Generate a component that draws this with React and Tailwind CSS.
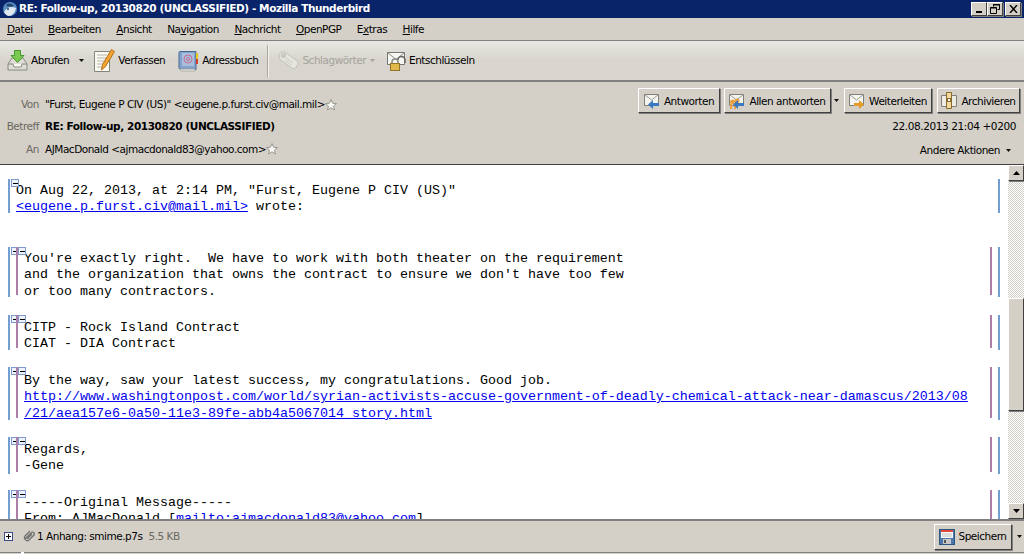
const ui = "font-['DejaVu_Sans',sans-serif] text-[10.5px] tracking-[-0.48px]";
const raised =
  "border border-t-white border-l-white border-b-[#404040] border-r-[#404040] shadow-[1px_1px_0_#808080]";

function Caret({ color = "#111" }) {
  return (
    <svg width="5" height="3" viewBox="0 0 5 3">
      <path d="M0 0h5L2.500 3z" fill={color} />
    </svg>
  );
}

function Key({ children }) {
  return <span className="underline">{children}</span>;
}

function ThunderbirdIcon() {
  return (
    <svg width="16" height="16" viewBox="0 0 16 16">
      <circle cx="8" cy="8" r="7" fill="#5b8fc4" />
      <path d="M2 11c3-5 7-6 12-4-1 5-4 8-7 8-2 0-4-2-5-4z" fill="#dfe7ef" />
      <path d="M5 3c3-1 6 0 7 2-2 1-5 1-8 0z" fill="#24466f" />
      <circle cx="6" cy="8" r="1" fill="#24466f" />
    </svg>
  );
}

function InboxIcon() {
  return (
    <svg width="21" height="21" viewBox="0 0 21 21">
      <path d="M1 14l4-6h11l4 6v6H1z" fill="#dedcd4" stroke="#8a8a80" />
      <path d="M1 14h5l1 3h7l1-3h5" fill="#fafaf6" stroke="#8a8a80" />
      <path d="M7.500 0.500h6v5h3.500l-6.500 7-6.500-7h3.500z" fill="#7cc850" stroke="#3f9a2a" />
    </svg>
  );
}

function ComposeIcon() {
  return (
    <svg width="21" height="23" viewBox="0 0 21 23">
      <path d="M0.500 2.500h15v20h-15z" fill="#fbfaf2" stroke="#85857c" />
      <path d="M3 6h10M3 9h10M3 12h8M3 15h6M3 18h5" stroke="#b4b4ac" />
      <path d="M17.500 0.500l3 2-9 15-4 3.500 1-5.500z" fill="#f2a535" stroke="#b86c14" />
    </svg>
  );
}

function BookIcon() {
  return (
    <svg width="21" height="22" viewBox="0 0 21 22">
      <path d="M2 1.500h16v18H3c-1 0-2-1-2-2V3c0-1 0-1.500 1-1.500z" fill="#84a4cc" stroke="#46688f" />
      <rect x="4" y="3" width="12" height="13" fill="#a9bedc" />
      <path d="M2 19h15v2H3z" fill="#e4e2da" stroke="#8a8a80" strokeWidth="0.500" />
      <circle cx="10" cy="9" r="4" fill="none" stroke="#c86c90" />
      <circle cx="10" cy="9" r="1.500" fill="none" stroke="#c86c90" />
      <rect x="18" y="3" width="2" height="6" fill="#e8c820" />
      <rect x="18" y="9" width="2" height="5" fill="#d43c2c" />
    </svg>
  );
}

function TagIcon() {
  return (
    <svg width="21" height="21" viewBox="0 0 21 21">
      <path d="M1 6c0-3 3-5 6-4l12 9c1.500 1 1.500 3 0.500 4l-2 3c-1 1-2.500 1-3.500 0L2 9.500z" fill="#e6e4de" stroke="#c4c1b9" />
      <circle cx="5.500" cy="5.500" r="2" fill="#d4d0c8" stroke="#bcb9b1" />
      <path d="M8 8l7 5M7 10l6 5" stroke="#cbc8c0" />
    </svg>
  );
}

function LockMailIcon() {
  return (
    <svg width="19" height="20" viewBox="0 0 19 20">
      <path d="M0.500 1.500h17v12h-17z" fill="#f6f6f2" stroke="#77776f" />
      <path d="M0.500 1.500l8.500 7 8.500-7" fill="none" stroke="#8a8a82" />
      <path d="M11 9a3.500 3.500 0 0 1 7 0v3" fill="none" stroke="#666" strokeWidth="1.500" />
      <path d="M5 13v-2a3 3 0 0 1 6 0v2" fill="none" stroke="#8a8a82" strokeWidth="1.500" />
      <rect x="3.500" y="12.500" width="9" height="7" fill="#e0b84c" stroke="#94742a" />
    </svg>
  );
}

function ReplyIcon({ arrow = "#3a78c0", flip = false, people = false }) {
  return (
    <svg width="16" height="16" viewBox="0 0 16 16">
      <path d="M0.500 1.500h14v11h-14z" fill="#f4f4f0" stroke="#808078" />
      <path d="M0.500 1.500L7.500 7l7-5.500" fill="none" stroke="#9a9a92" />
      {people && (
        <g>
          <circle cx="3.500" cy="9" r="2.500" fill="#e8a040" />
          <circle cx="8" cy="8" r="2.500" fill="#e8a040" />
          <path d="M1 16v-5h2v5zM5 16v-5h2v5z" fill="#e8a040" />
        </g>
      )}
      <path
        d={flip ? "M5 10h5V7l5 4.500-5 4.500v-3H5z" : "M15 10H9V7l-5 4.500L9 16v-3h6z"}
        fill={arrow}
      />
    </svg>
  );
}

function ArchiveIcon() {
  return (
    <svg width="16" height="18" viewBox="0 0 16 18">
      <path d="M0.500 3.500h15v11h-15z" fill="#ecebe4" stroke="#808078" />
      <path d="M5.500 0.500h5v16h-5z" fill="#f2d9a0" stroke="#8a6a2c" />
      <rect x="6.500" y="6.500" width="3" height="3" fill="#fff" stroke="#8a6a2c" />
    </svg>
  );
}

function FloppyIcon() {
  return (
    <svg width="16" height="16" viewBox="0 0 16 16">
      <rect x="0.500" y="0.500" width="15" height="15" fill="#4f78aa" stroke="#2e5484" />
      <rect x="2" y="1" width="12" height="8" fill="#f6f6f6" />
      <rect x="2" y="1" width="12" height="2" fill="#e0483c" />
      <path d="M3 5h10M3 7h10" stroke="#c4c4c4" />
      <rect x="4" y="10" width="8" height="5" fill="#c8c8c8" />
      <rect x="5" y="11" width="2" height="3" fill="#555" />
    </svg>
  );
}

function PaperclipIcon() {
  return (
    <svg width="13" height="13" viewBox="0 0 13 13">
      <path
        d="M2 9l6-6c2-2 4 0 3 2l-5 5c-2 2-6-1-4-4l5-5M4 9l5-5"
        fill="none"
        stroke="#707070"
        strokeWidth="1.300"
      />
    </svg>
  );
}

function StarIcon() {
  return (
    <svg width="12" height="12" viewBox="0 0 11 11" className="shrink-0">
      <path
        d="M5.500 0.500l1.500 3.400 3.500 0.300-2.700 2.300 0.900 3.500-3.200-1.900-3.200 1.900 0.900-3.500L0.500 4.200 4 3.900z"
        fill="#f8f8f6"
        stroke="#8c8c84"
        strokeWidth="0.800"
      />
    </svg>
  );
}

function ToolButton({ icon, label, caret, disabled, className = "" }) {
  return (
    <button
      className={`flex items-center gap-[3px] ${disabled ? "text-[#a5a29b]" : "text-black"} ${className}`}
    >
      {icon}
      <span className="pt-[1px]">{label}</span>
      {caret}
    </button>
  );
}

function HeaderButton({ icon, label, width }) {
  return (
    <button className={`flex h-[25px] items-center justify-center gap-[4px] bg-[#d4d0c8] ${raised} ${width}`}>
      {icon}
      <span className="pt-[2px]">{label}</span>
    </button>
  );
}

function Twisty({ className = "" }) {
  return (
    <span
      className={`absolute flex h-[8px] w-[8px] items-center justify-center border border-[#7f9ad0] bg-[#eef2fa] ${className}`}
    >
      <span className="h-px w-[5px] bg-black" />
    </span>
  );
}

function Quote({ nested, top, children, className = "" }) {
  return (
    <div className={`relative mr-[8px] ml-[8px] border-x-2 border-x-[#729fcf] pl-[6px] ${top} ${className}`}>
      <Twisty className="top-0 left-[1px]" />
      {nested ? (
        <div className="relative mt-[2px] mr-[6px] h-[calc(100%-2px)] border-x-2 border-x-[#ad7fa8] pl-[6px]">
          <Twisty className="top-0 left-0" />
          {children}
        </div>
      ) : (
        children
      )}
    </div>
  );
}

function Mail({ children }) {
  return <a className="text-[#0000ee] underline">{children}</a>;
}

const menus = [
  <><Key>D</Key>atei</>,
  <><Key>B</Key>earbeiten</>,
  <><Key>A</Key>nsicht</>,
  <>Na<Key>v</Key>igation</>,
  <><Key>N</Key>achricht</>,
  <><Key>O</Key>penPGP</>,
  <>E<Key>x</Key>tras</>,
  <><Key>H</Key>ilfe</>,
];

const headerRows = [
  ["Von", '"Furst, Eugene P CIV (US)" <eugene.p.furst.civ@mail.mil>', true, false],
  ["Betreff", "RE: Follow-up, 20130820 (UNCLASSIFIED)", false, true],
  ["An", "AJMacDonald <ajmacdonald83@yahoo.com>", true, false],
];

export default function App() {
  return (
    <div className={`flex h-[554px] w-[1024px] flex-col overflow-hidden bg-[#d4d0c8] text-black ${ui}`}>
      {/* title bar */}
      <div className="flex h-[18px] shrink-0 items-center justify-between bg-[#0a246a] pr-[3px] pl-[2px]">
        <div className="flex items-center gap-[1px]">
          <ThunderbirdIcon />
          <span className="font-bold tracking-[-0.41px] text-white">
            RE: Follow-up, 20130820 (UNCLASSIFIED) - Mozilla Thunderbird
          </span>
        </div>
        <div className="flex items-center">
          <span className={`flex h-[14px] w-[16px] items-end justify-center bg-[#d4d0c8] pb-[2px] ${raised}`}>
            <span className="h-[2px] w-[6px] bg-black" />
          </span>
          <span className={`flex h-[14px] w-[16px] items-center justify-center bg-[#d4d0c8] ${raised}`}>
            <svg width="10" height="10" viewBox="0 0 10 10">
              <path d="M3.500 2.500v-2h6v5h-2M0.500 3.500h6v6h-6z" fill="none" stroke="#000" />
              <path d="M3 1h7M0 4h7" stroke="#000" />
            </svg>
          </span>
          <span className={`ml-[2px] flex h-[14px] w-[16px] items-center justify-center bg-[#d4d0c8] ${raised}`}>
            <svg width="9" height="8" viewBox="0 0 9 8">
              <path d="M1 0l7 8M8 0L1 8" stroke="#000" strokeWidth="1.400" />
            </svg>
          </span>
        </div>
      </div>

      {/* menu bar */}
      <div className="flex h-[23px] shrink-0 items-center gap-[15.400px] border-b border-b-[#808080] pt-[1px] pl-[7px]">
        {menus.map((item, i) => (
          <span key={i}>{item}</span>
        ))}
      </div>

      {/* toolbar */}
      <div className="flex h-[41px] shrink-0 items-center border-b-2 border-b-[#808080] bg-gradient-to-b from-[#e8e7e3] to-[#d8d5ce] to-50% pl-[7px]">
        <ToolButton icon={<InboxIcon />} label="Abrufen" caret={<span className="ml-[7px]"><Caret /></span>} />
        <ToolButton icon={<ComposeIcon />} label="Verfassen" className="ml-[10px]" />
        <ToolButton icon={<BookIcon />} label="Adressbuch" className="ml-[13px]" />
        <span className="ml-[9px] h-[32px] w-px bg-[#a8a59e] shadow-[1px_0_0_#f4f3f0]" />
        <ToolButton
          disabled
          icon={<TagIcon />}
          label="Schlagwörter"
          caret={<span className="ml-[1px]"><Caret color="#a5a29b" /></span>}
          className="ml-[10px]"
        />
        <ToolButton icon={<LockMailIcon />} label="Entschlüsseln" className="ml-[12px]" />
      </div>

      {/* message header */}
      <div className="flex h-[83px] shrink-0 justify-between border-b border-b-[#404040]">
        <div className="flex flex-col pt-[11.500px]">
          {headerRows.map(([label, value, star, bold]) => (
            <div key={label} className="flex h-[22.400px] items-center">
              <span className="w-[39px] text-right text-[#6b6860]">{label}</span>
              <span className={`ml-[6px] ${bold ? "font-bold tracking-[-0.41px]" : ""}`}>{value}</span>
              {star && <StarIcon />}
            </div>
          ))}
        </div>
        <div className="flex flex-col items-end pt-[6px] pr-[4px]">
          <div className="flex items-center">
            <HeaderButton icon={<ReplyIcon />} label="Antworten" width="w-[82px]" />
            <HeaderButton icon={<ReplyIcon people />} label="Allen antworten" width="ml-[4px] w-[107px]" />
            <span className="mr-[5px] ml-[3px]"><Caret /></span>
            <HeaderButton icon={<ReplyIcon flip arrow="#e89a28" />} label="Weiterleiten" width="w-[88px]" />
            <HeaderButton icon={<ArchiveIcon />} label="Archivieren" width="ml-[5px] w-[83px]" />
          </div>
          <span className="mt-[6px] pr-[4px] tracking-[-0.4px]">22.08.2013 21:04 +0200</span>
          <span className="mt-[8px] flex items-center gap-[6px] pr-[9px]">
            Andere Aktionen <Caret />
          </span>
        </div>
      </div>

      {/* message body */}
      <div className="flex h-[354px] shrink-0">
        <div className="h-full w-[1008px] overflow-hidden bg-white font-['Liberation_Mono',monospace] text-[13.330px] leading-[16.300px] tracking-normal whitespace-pre">
          <Quote top="mt-[14px]" className="h-[34px] pt-[4px]">
            <div>{'On Aug 22, 2013, at 2:14 PM, "Furst, Eugene P CIV (US)"'}</div>
            <div>
              <Mail>{"<eugene.p.furst.civ@mail.mil>"}</Mail> wrote:
            </div>
          </Quote>
          <Quote nested top="mt-[34px]" className="h-[50px]">
            <div className="pt-[4px]">
              {"You're exactly right.  We have to work with both theater on the requirement\nand the organization that owns the contract to ensure we don't have too few\nor too many contractors."}
            </div>
          </Quote>
          <Quote nested top="mt-[18px]" className="h-[35px]">
            <div className="pt-[5px]">{"CITP - Rock Island Contract\nCIAT - DIA Contract"}</div>
          </Quote>
          <Quote nested top="mt-[17px]" className="h-[53px]">
            <div className="pt-[6px]">
              <div>By the way, saw your latest success, my congratulations. Good job.</div>
              <Mail>
                {"http://www.washingtonpost.com/world/syrian-activists-accuse-government-of-deadly-chemical-attack-near-damascus/2013/08\n/21/aea157e6-0a50-11e3-89fe-abb4a5067014_story.html"}
              </Mail>
            </div>
          </Quote>
          <Quote nested top="mt-[17px]" className="h-[37px]">
            <div className="pt-[5px]">{"Regards,\n-Gene"}</div>
          </Quote>
          <Quote nested top="mt-[16px]" className="h-[60px]">
            <div className="pt-[5px]">
              {"-----Original Message-----\nFrom: AJMacDonald ["}
              <Mail>mailto:ajmacdonald83@yahoo.com</Mail>]
            </div>
          </Quote>
        </div>

        {/* scrollbar */}
        <div className="flex h-full w-[16px] flex-col bg-[repeating-conic-gradient(#d4d0c8_0_25%,#ffffff_0_50%)] bg-[length:2px_2px]">
          <span className={`flex h-[16px] shrink-0 items-center justify-center bg-[#d4d0c8] ${raised}`}>
            <svg width="7" height="4" viewBox="0 0 7 4"><path d="M0 4h7L3.500 0z" /></svg>
          </span>
          <span className={`mt-[117px] h-[113px] shrink-0 bg-[#d4d0c8] ${raised}`} />
          <span className="flex-1" />
          <span className={`flex h-[16px] shrink-0 items-center justify-center bg-[#d4d0c8] ${raised}`}>
            <svg width="7" height="4" viewBox="0 0 7 4"><path d="M0 0h7L3.500 4z" /></svg>
          </span>
        </div>
      </div>

      {/* attachment bar */}
      <div className="flex h-[33px] shrink-0 items-center border-t-2 border-t-[#808080] pl-[4px]">
        <span className="flex h-[9px] w-[9px] items-center justify-center border border-[#3c4a90] bg-white">
          <span className="relative h-px w-[5px] bg-black">
            <span className="absolute top-[-2px] left-[2px] h-[5px] w-px bg-black" />
          </span>
        </span>
        <span className="ml-[10px]"><PaperclipIcon /></span>
        <span className="ml-[1px] pt-[1px]">1 Anhang: smime.p7s</span>
        <span className="ml-[6px] pt-[1px] text-[#6b6860]">5.5 KB</span>
        <button className={`ml-auto flex h-[26px] w-[78px] items-center justify-center gap-[3px] bg-[#d4d0c8] ${raised}`}>
          <FloppyIcon />
          <span className="pt-[1px]">Speichern</span>
        </button>
        <span className="mr-[2px] ml-[5px]"><Caret /></span>
      </div>

      {/* status strip */}
      <div className="flex h-[2px] shrink-0">
        <span className="w-[21px] border-t border-t-[#808080]" />
        <span className="w-[3px] bg-white" />
        <span className="flex-1 border-t border-t-[#808080]" />
      </div>
    </div>
  );
}
